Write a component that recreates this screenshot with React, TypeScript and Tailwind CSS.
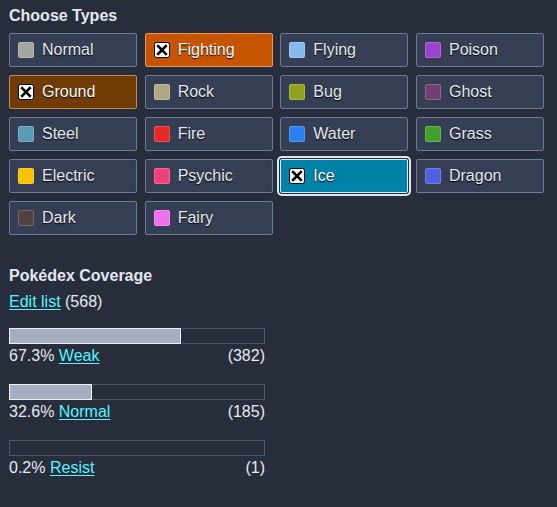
import React from "react";

type T = { name: string; color: string; sel?: { bg: string; border: string; ring?: boolean } };

const types: T[] = [
  { name: "Normal", color: "#a3a59f" },
  { name: "Fighting", color: "#ff8000", sel: { bg: "#c75400", border: "#e99a5c" } },
  { name: "Flying", color: "#86baef" },
  { name: "Poison", color: "#9a43cc" },
  { name: "Ground", color: "#915121", sel: { bg: "#713b04", border: "#c48a55" } },
  { name: "Rock", color: "#afa981" },
  { name: "Bug", color: "#91a119" },
  { name: "Ghost", color: "#704170" },
  { name: "Steel", color: "#5b9bb5" },
  { name: "Fire", color: "#e62829" },
  { name: "Water", color: "#2980ef" },
  { name: "Grass", color: "#3fa129" },
  { name: "Electric", color: "#fac000" },
  { name: "Psychic", color: "#ef4179" },
  { name: "Ice", color: "#3dcef3", sel: { bg: "#0081a8", border: "#d6eef6", ring: true } },
  { name: "Dragon", color: "#5060e1" },
  { name: "Dark", color: "#50413f" },
  { name: "Fairy", color: "#ef70ef" },
];

function Check() {
  return (
    <svg width="16" height="16" viewBox="0 0 16 16" className="shrink-0">
      <rect x="0.5" y="0.5" width="15" height="15" rx="2" fill="#fff" stroke="#000" />
      <path d="M4.2 4.2 L11.8 11.8 M11.8 4.2 L4.2 11.8" stroke="#000" strokeWidth="2.6" strokeLinecap="square" />
    </svg>
  );
}

const rows = [
  { pct: 67.3, label: "Weak", count: 382 },
  { pct: 32.6, label: "Normal", count: 185 },
  { pct: 0.2, label: "Resist", count: 1 },
];

export default function App() {
  return (
    <div className="w-[557px] h-[507px] bg-[#272d3b] font-['Liberation_Sans',Arial,sans-serif] text-[#e6eaf1] pt-[7px] px-[9px]">
      <h2 className="text-[16px] font-bold leading-[18px] text-[#e3e8f0]">Choose Types</h2>
      <div className="grid grid-cols-[repeat(4,128px)] gap-x-[7.67px] gap-y-[8px] mt-[8px]">
        {types.map((t) => {
          const s = t.sel;
          return (
            <div
              key={t.name}
              className={
                "h-[34px] rounded-[2px] border flex items-center gap-[8px] pl-[8px] text-[16px] leading-[18px] [text-shadow:0_1px_1px_#000] " +
                (s ? "text-white" : "bg-[#353e52] border-[#6b7a99] text-[#e4e9f1]") +
                (s?.ring ? " shadow-[0_0_0_1px_#272d3b,0_0_0_3px_#dfe5ee]" : "")
              }
              style={s ? { backgroundColor: s.bg, borderColor: s.border } : undefined}
            >
              {s ? (
                <Check />
              ) : (
                <span
                  className="w-[16px] h-[16px] rounded-[2px] border border-white/20 shrink-0"
                  style={{ backgroundColor: t.color }}
                />
              )}
              <span>{t.name}</span>
            </div>
          );
        })}
      </div>

      <h2 className="text-[16px] font-bold leading-[18px] text-[#e3e8f0] mt-[32px]">Pokédex Coverage</h2>
      <div className="text-[16px] leading-[18px] mt-[8px]">
        <a className="text-[#55f5ff] underline underline-offset-[2px]">Edit list</a> (568)
      </div>

      <div className="w-[256px] mt-[17px] flex flex-col gap-[19px]">
        {rows.map((r) => {
          const w = Math.round((256 * r.pct) / 100);
          return (
            <div key={r.label}>
              <div className="relative h-[16px] border border-[#4b556c]">
                {w >= 3 && (
                  <div
                    className="absolute left-[-1px] top-[-1px] bottom-[-1px] border border-[#eef1f6] bg-[#a6aec1]"
                    style={{ width: w }}
                  />
                )}
              </div>
              <div className="flex justify-between text-[16px] leading-[18px] mt-[3px]">
                <span>
                  {r.pct}% <a className="text-[#55f5ff] underline underline-offset-[2px]">{r.label}</a>
                </span>
                <span>({r.count})</span>
              </div>
            </div>
          );
        })}
      </div>
    </div>
  );
}
